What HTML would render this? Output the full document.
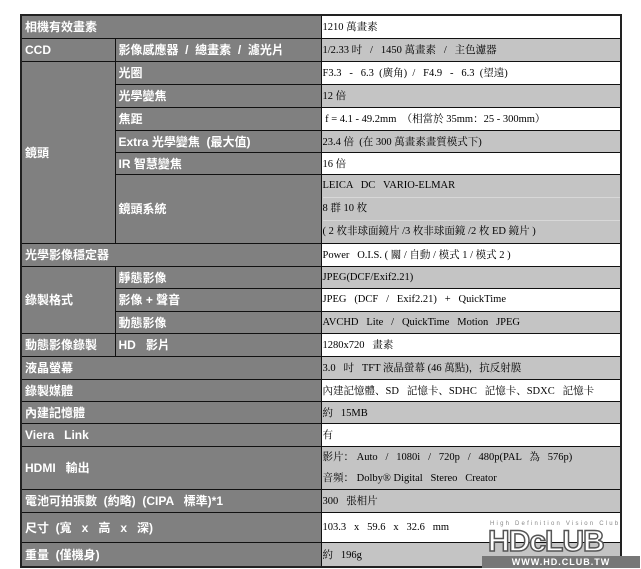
<!DOCTYPE html>
<html><head><meta charset="utf-8"><style>
body{margin:0;width:641px;height:569px;background:#fff;position:relative;overflow:hidden}
table{position:absolute;left:20px;top:14px;border-collapse:collapse;width:600px;table-layout:fixed;border:2px solid #222}
td{border:1px solid #111;padding:0 0 0 3px;white-space:nowrap;overflow:hidden}
td.l{background:#808080;color:#fff;font:bold 12px "Liberation Sans","Noto Sans CJK TC",sans-serif}
td.r{color:#000;font:10.5px "Liberation Serif","Noto Serif CJK SC",serif;padding-left:1px}
.w{background:#fff}.g{background:#c4c4c4}
.sub div{height:22px;line-height:22px;border-bottom:1px solid #d8d8d8}
.sub div:last-child{border-bottom:none}
.wm{position:absolute;right:8px;bottom:4px;font-family:"Liberation Sans",sans-serif}
</style></head><body>
<table>
<colgroup><col style="width:94px"><col style="width:206px"><col style="width:300px"></colgroup>
<tr style="height:23px"><td class="l" colspan="2">相機有效畫素</td><td class="r w">1210 萬畫素</td></tr>
<tr style="height:23px"><td class="l">CCD</td><td class="l">影像感應器 &nbsp;/ &nbsp;總畫素 &nbsp;/ &nbsp;濾光片</td><td class="r g">1/2.33 吋 &nbsp; / &nbsp; 1450 萬畫素 &nbsp; / &nbsp; 主色濾器</td></tr>
<tr style="height:23px"><td class="l" rowspan="6">鏡頭</td><td class="l">光圈</td><td class="r w">F3.3 &nbsp; - &nbsp; 6.3 &nbsp;(廣角) &nbsp;/ &nbsp; F4.9 &nbsp; - &nbsp; 6.3 &nbsp;(望遠)</td></tr>
<tr style="height:23px"><td class="l">光學變焦</td><td class="r g">12 倍</td></tr>
<tr style="height:23px"><td class="l">焦距</td><td class="r w">&nbsp;f = 4.1 - 49.2mm &nbsp;（相當於 35mm：25 - 300mm）</td></tr>
<tr style="height:22px"><td class="l">Extra 光學變焦 &nbsp;(最大值)</td><td class="r g">23.4 倍 &nbsp;(在 300 萬畫素畫質模式下)</td></tr>
<tr style="height:22px"><td class="l">IR 智慧變焦</td><td class="r w">16 倍</td></tr>
<tr style="height:66px"><td class="l">鏡頭系統</td><td class="r g sub"><div>LEICA &nbsp; DC &nbsp; VARIO-ELMAR</div><div>8 群 10 枚</div><div>( 2 枚非球面鏡片 /3 枚非球面鏡 /2 枚 ED 鏡片 )</div></td></tr>
<tr style="height:23px"><td class="l" colspan="2">光學影像穩定器</td><td class="r w">Power &nbsp; O.I.S. ( 關 / 自動 / 模式 1 / 模式 2 )</td></tr>
<tr style="height:22px"><td class="l" rowspan="3">錄製格式</td><td class="l">靜態影像</td><td class="r g">JPEG(DCF/Exif2.21)</td></tr>
<tr style="height:23px"><td class="l">影像 + 聲音</td><td class="r w">JPEG &nbsp; (DCF &nbsp; / &nbsp; Exif2.21) &nbsp; + &nbsp; QuickTime</td></tr>
<tr style="height:22px"><td class="l">動態影像</td><td class="r g">AVCHD &nbsp; Lite &nbsp; / &nbsp; QuickTime &nbsp; Motion &nbsp; JPEG</td></tr>
<tr style="height:23px"><td class="l">動態影像錄製</td><td class="l">HD &nbsp; 影片</td><td class="r w">1280x720 &nbsp; 畫素</td></tr>
<tr style="height:23px"><td class="l" colspan="2">液晶螢幕</td><td class="r g">3.0 &nbsp; 吋 &nbsp; TFT 液晶螢幕 (46 萬點)，抗反射膜</td></tr>
<tr style="height:22px"><td class="l" colspan="2">錄製媒體</td><td class="r w">內建記憶體、SD &nbsp; 記憶卡、SDHC &nbsp; 記憶卡、SDXC &nbsp; 記憶卡</td></tr>
<tr style="height:22px"><td class="l" colspan="2">內建記憶體</td><td class="r g">約 &nbsp; 15MB</td></tr>
<tr style="height:23px"><td class="l" colspan="2">Viera &nbsp; Link</td><td class="r w">有</td></tr>
<tr style="height:43px"><td class="l" colspan="2">HDMI &nbsp; 輸出</td><td class="r g sub"><div style="height:21px;line-height:21px;border:none">影片： Auto &nbsp; / &nbsp; 1080i &nbsp; / &nbsp; 720p &nbsp; / &nbsp; 480p(PAL &nbsp; 為 &nbsp; 576p)</div><div style="height:21px;line-height:21px">音頻： Dolby® Digital &nbsp; Stereo &nbsp; Creator</div></td></tr>
<tr style="height:23px"><td class="l" colspan="2">電池可拍張數 &nbsp;(約略) &nbsp;(CIPA &nbsp; 標準)*1</td><td class="r g">300 &nbsp; 張相片</td></tr>
<tr style="height:30px"><td class="l" colspan="2">尺寸 &nbsp;(寬 &nbsp; x &nbsp; 高 &nbsp; x &nbsp; 深)</td><td class="r w">103.3 &nbsp; x &nbsp; 59.6 &nbsp; x &nbsp; 32.6 &nbsp; mm</td></tr>
<tr style="height:25px"><td class="l" colspan="2">重量 &nbsp;(僅機身)</td><td class="r g">約 &nbsp; 196g</td></tr>
</table>
<div style="position:absolute;left:490px;top:521px;font:6px 'Liberation Sans',sans-serif;letter-spacing:2.2px;color:#888">High Definition Vision Club</div>
<div style="position:absolute;left:488px;top:528px;font:bold 30px/28px 'Liberation Sans',sans-serif;color:#fff;-webkit-text-stroke:1.5px #555;letter-spacing:-1px">HDcLUB</div>
<div style="position:absolute;left:482px;top:556px;width:158px;height:12px;background:#777;color:#fff;font:bold 9px/12px 'Liberation Sans',sans-serif;text-align:center;letter-spacing:1px">WWW.HD.CLUB.TW</div>
</body></html>
